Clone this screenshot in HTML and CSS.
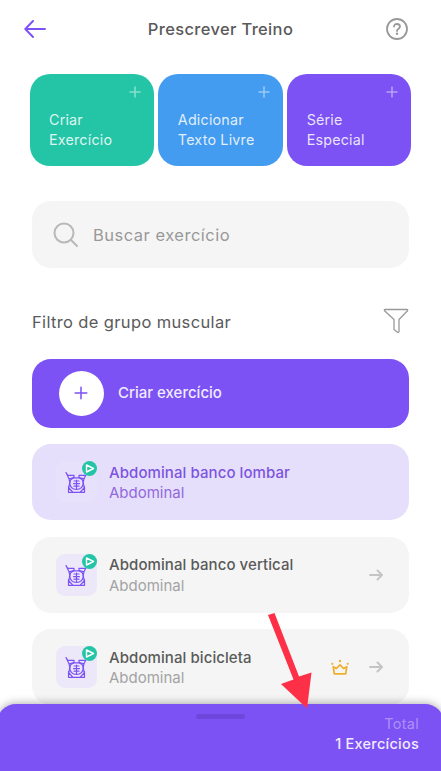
FILE: index.html
```html
<!DOCTYPE html>
<html lang="pt-BR">

<head>
	<meta charset="UTF-8">
	<meta name="viewport" content="width=device-width, initial-scale=1.0">
	<title>Prescrever Treino</title>
	<link rel="stylesheet" href="styles.css">
</head>

<body>
	<svg class="sprite">
		<symbol id="plus" viewBox="0 0 12 12">
			<path d="M6 1v10M1 6h10" />
		</symbol>
		<symbol id="arrow" viewBox="0 0 14 12">
			<path d="M1 6h12M8.500 1.500L13 6l-4.500 4.500" />
		</symbol>
		<symbol id="abs" viewBox="0 0 22 23">
			<path d="M1 1.500l1.800 2.800h6.200v2.200L4 7.800zM20.700 4.300H14v2.200l5 1.300zM4 7.800l.8 3.200-.8 5M19 7.800l-.8 3.200.8 5M3.500 15.500v5.800h16v-5.800M3.500 16.500l4.500 4.800M19.500 16.500L15 21.300" />
			<path d="M9 6.800c-2.800.7-4.200 2.700-4.200 5.200 0 3.500 2.500 6.500 6.700 6.500s6.700-3 6.700-6.500c0-2.500-1.400-4.500-4.200-5.200zM11.500 9v9M9 10h5M8.500 12.600h6M9 15.200h5" />
		</symbol>
	</svg>
	<div class="screen">
		<header class="header">
			<svg class="back" viewBox="0 0 22 18"><path d="M21 9H1.500M9 1L1.300 9 9 17" /></svg>
			<h1>Prescrever Treino</h1>
			<svg class="help" viewBox="0 0 22 22">
				<circle cx="11" cy="11" r="10" />
				<path d="M8 8.600C8 6.900 9.300 6 11 6s3 1 3 2.600c0 2-3 2.200-3 4.400" />
				<circle class="dot" cx="11" cy="15.700" r="1.200" />
			</svg>
		</header>
		<div class="actions">
			<div class="action green"><span>Criar<br>Exercício</span><svg><use href="#plus" /></svg></div>
			<div class="action blue"><span>Adicionar<br>Texto Livre</span><svg><use href="#plus" /></svg></div>
			<div class="action purple"><span>Série<br>Especial</span><svg><use href="#plus" /></svg></div>
		</div>
		<div class="search">
			<svg viewBox="0 0 26 26"><circle cx="11" cy="11" r="9.500" /><path d="M18 18l6 6" /></svg>
			<span>Buscar exercício</span>
		</div>
		<div class="filter">
			<span>Filtro de grupo muscular</span>
			<svg viewBox="0 0 26 26"><path d="M2 1.500h22q1 0 .5 1.200L16 11.500v12.300q-.5 1-1.500.5L11 21.500v-10L1.500 2.700Q1 1.500 2 1.500z" /></svg>
		</div>
		<div class="create">
			<div class="circle"><svg><use href="#plus" /></svg></div>
			<span>Criar exercício</span>
		</div>
		<div class="item selected">
			<div class="thumb">
				<svg class="abs"><use href="#abs" /></svg>
				<svg class="play" viewBox="0 0 15 15"><circle cx="7.500" cy="7.500" r="7.500" /><path d="M4.500 4l7 3.500-7 3.500z" /></svg>
			</div>
			<div class="info">
				<div class="name">Abdominal banco lombar</div>
				<div class="group">Abdominal</div>
			</div>
		</div>
		<div class="item">
			<div class="thumb">
				<svg class="abs"><use href="#abs" /></svg>
				<svg class="play" viewBox="0 0 15 15"><circle cx="7.500" cy="7.500" r="7.500" /><path d="M4.500 4l7 3.500-7 3.500z" /></svg>
			</div>
			<div class="info">
				<div class="name">Abdominal banco vertical</div>
				<div class="group">Abdominal</div>
			</div>
			<svg class="go"><use href="#arrow" /></svg>
		</div>
		<div class="item">
			<div class="thumb">
				<svg class="abs"><use href="#abs" /></svg>
				<svg class="play" viewBox="0 0 15 15"><circle cx="7.500" cy="7.500" r="7.500" /><path d="M4.500 4l7 3.500-7 3.500z" /></svg>
			</div>
			<div class="info">
				<div class="name">Abdominal bicicleta</div>
				<div class="group">Abdominal</div>
			</div>
			<svg class="crown" viewBox="0 0 18 16">
				<path d="M2.300 7.800l1 7h11.400l1-7-3.200 1.700L9 5.800 5.500 9.500z" />
				<circle cx="1.300" cy="4.800" r="1.100" /><circle cx="9" cy="2" r="1.200" /><circle cx="16.700" cy="4.800" r="1.100" />
			</svg>
			<svg class="go"><use href="#arrow" /></svg>
		</div>
	</div>
	<div class="sheet">
		<div class="handle"></div>
		<div class="total">Total</div>
		<div class="count">1 Exercícios</div>
	</div>
	<svg class="pointer" viewBox="0 0 44 98"><path d="M0 2L6.500 0l24.500 63.500 12.500-4-4.500 36L13 71l12.500-4.500z" /></svg>
</body>

</html>
```
FILE: styles.css
```css
	* {
		box-sizing: border-box;
	}

	body {
		margin: 0;
		height: 771px;
		font-family: Inter, sans-serif;
		background-color: #fff;
		color: #5a5a5a;
		overflow: hidden;
		position: relative;
	}

	svg {
		fill: none;
		stroke-linecap: round;
		stroke-linejoin: round;
		flex-shrink: 0;
	}

	.sprite {
		position: absolute;
		width: 0;
		height: 0;
	}

	.screen {
		padding: 0 32px;
	}

	.header {
		display: flex;
		align-items: center;
		justify-content: space-between;
		height: 58px;
		margin: 0 -32px;
		padding: 0 33px 0 24px;
	}

	.header h1 {
		margin: 0 0 0 9px;
		font-size: 16.5px;
		font-weight: 500;
		letter-spacing: 0.35px;
	}

	.back {
		width: 22px;
		height: 18px;
		stroke: #7c52f4;
		stroke-width: 1.9;
	}

	.help {
		width: 22px;
		height: 22px;
		stroke: #999;
		stroke-width: 1.8;
	}

	.help .dot {
		fill: #999;
		stroke: none;
	}

	.actions {
		display: flex;
		gap: 4.5px;
		margin: 16px -2.5px 0;
	}

	.action {
		flex: 1;
		display: flex;
		justify-content: space-between;
		height: 91.5px;
		padding: 35.5px 13px 0 19.5px;
		border-radius: 20px;
		color: rgba(255, 255, 255, 0.85);
		font-size: 14.3px;
		line-height: 20px;
		letter-spacing: 0.2px;
		white-space: nowrap;
	}

	.action svg {
		width: 12px;
		height: 12px;
		margin: -24px 0 0 -12px;
		stroke: rgba(255, 255, 255, 0.45);
		stroke-width: 1.6;
	}

	.green {
		background-color: #24c5a6;
	}

	.blue {
		background-color: #449cf0;
	}

	.purple {
		background-color: #7c52f4;
	}

	.search {
		display: flex;
		align-items: center;
		gap: 14px;
		height: 67px;
		margin-top: 35.5px;
		padding-left: 21px;
		border-radius: 19px;
		background-color: #f5f5f5;
		color: #999;
		font-size: 16.5px;
		letter-spacing: 0.5px;
	}

	.search svg {
		width: 26px;
		height: 26px;
		stroke: #b8b8b8;
		stroke-width: 2;
	}

	.filter {
		display: flex;
		align-items: center;
		justify-content: space-between;
		height: 26px;
		margin-top: 40px;
		font-size: 16.5px;
		letter-spacing: 0.36px;
	}

	.filter span {
		padding-top: 2px;
	}

	.filter svg {
		width: 26px;
		height: 26px;
		stroke: #999;
		stroke-width: 1.3;
	}

	.create {
		display: flex;
		align-items: center;
		gap: 14.5px;
		height: 69px;
		margin-top: 24.5px;
		padding-left: 26.5px;
		border-radius: 19px;
		background-color: #7c52f4;
		color: #f1ecff;
		font-size: 15px;
		font-weight: 500;
	}

	.create span {
		margin-top: -1px;
	}

	.circle {
		display: flex;
		align-items: center;
		justify-content: center;
		width: 45px;
		height: 45px;
		border-radius: 50%;
		background-color: #fff;
	}

	.circle svg {
		width: 14px;
		height: 14px;
		stroke: #7c52f4;
		stroke-width: 1.3;
	}

	.item {
		display: flex;
		align-items: center;
		height: 76px;
		margin-top: 16.6px;
		padding: 0 26px 0 24px;
		border-radius: 19px;
		background-color: #f5f5f5;
	}

	.thumb {
		position: relative;
		display: flex;
		width: 41px;
		height: 42px;
		padding: 10px 0 0 9px;
		border-radius: 9px;
		background-color: #ece8f9;
	}

	.abs {
		width: 22px;
		height: 23px;
		stroke: #7c52f4;
		stroke-width: 1.2;
	}

	.play {
		position: absolute;
		top: 0;
		right: 0;
		width: 15px;
		height: 15px;
		stroke: #fff;
		stroke-width: 1.4;
	}

	.play circle {
		fill: #24c5a6;
		stroke: none;
	}

	.info {
		flex: 1;
		padding: 2px 0 0 12px;
		font-size: 15px;
		line-height: 20.5px;
		white-space: nowrap;
	}

	.name {
		font-weight: 500;
		letter-spacing: 0.08px;
	}

	.group {
		color: #a3a3a3;
	}

	.selected {
		background-color: #e6dffc;
		color: #7d54de;
	}

	.selected .thumb {
		background-color: #e8e1fc;
	}

	.selected .group {
		color: #9269dd;
	}

	.go {
		width: 14px;
		height: 12px;
		stroke: #c4c4c4;
		stroke-width: 1.9;
	}

	.crown {
		width: 18px;
		height: 16px;
		margin-right: 20.5px;
		stroke: #f0b02f;
		stroke-width: 1.8;
	}

	.crown circle {
		fill: #f0b02f;
		stroke: none;
	}

	.sheet {
		position: absolute;
		left: -3px;
		right: -3px;
		bottom: 0;
		height: 67px;
		padding: 10px 25px 0;
		border-radius: 19px 19px 0 0;
		background-color: #7c52f4;
		box-shadow: 0 -1px 8px rgba(0, 0, 0, 0.3);
		font-size: 14.5px;
		line-height: 20px;
		letter-spacing: 0.25px;
		text-align: right;
	}

	.handle {
		width: 49px;
		height: 5px;
		margin: 0 auto -5px;
		border-radius: 3px;
		background-color: #6f46dc;
	}

	.total {
		color: #ac90f8;
	}

	.count {
		color: #f1ecff;
		font-weight: 500;
	}

	.pointer {
		position: absolute;
		left: 268px;
		top: 613px;
		width: 44px;
		height: 98px;
		fill: #fd3048;
	}
```
